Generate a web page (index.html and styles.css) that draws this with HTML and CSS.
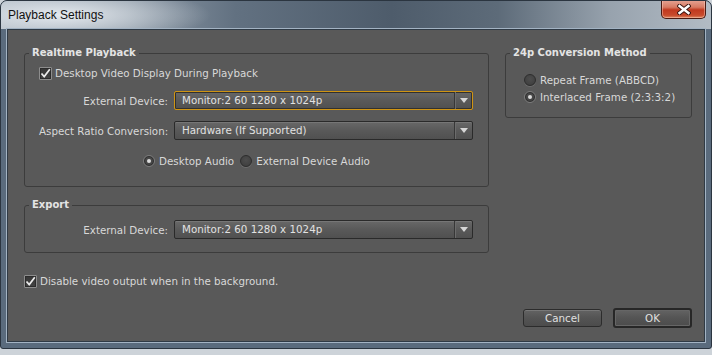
FILE: index.html
```html
<!DOCTYPE html>
<html lang="en">
<head>
    <meta charset="UTF-8">
    <title>Playback Settings</title>
    <link rel="stylesheet" href="styles.css">
</head>
<body>

    <div class="window">
        <div class="titlebar">
            <span class="title">Playback Settings</span>
            <button class="close" title="Close">
                <svg width="14" height="11" viewBox="0 0 14 11">
                    <path d="M2.5 2 L11.5 9 M11.5 2 L2.5 9" stroke="#3b1510" stroke-width="4.4" stroke-linecap="square"/>
                    <path d="M2.5 2 L11.5 9 M11.5 2 L2.5 9" stroke="#ffffff" stroke-width="2.4" stroke-linecap="square"/>
                </svg>
            </button>
        </div>

        <div class="client">
            <div class="top">
                <div class="left-col">
                    <!-- 实时播放 -->
                    <fieldset class="group realtime">
                        <legend>Realtime Playback</legend>
                        <label class="check-row desktop-video">
                            <span class="checkbox"><svg width="11" height="11" viewBox="0 0 11 11"><path d="M1.5 5.5 L4.2 8.6 L9.8 1.2" fill="none" stroke="#ececec" stroke-width="1.7"/></svg></span>
                            Desktop Video Display During Playback
                        </label>
                        <div class="field-grid">
                            <span class="field-label">External Device:</span>
                            <div class="select focused">
                                <span class="select-value">Monitor:2 60 1280 x 1024p</span>
                                <span class="select-arrow"></span>
                            </div>
                            <span class="field-label">Aspect Ratio Conversion:</span>
                            <div class="select">
                                <span class="select-value">Hardware (If Supported)</span>
                                <span class="select-arrow"></span>
                            </div>
                        </div>
                        <div class="audio-row">
                            <label class="radio-row"><span class="radio checked"></span>Desktop Audio</label>
                            <label class="radio-row"><span class="radio"></span>External Device Audio</label>
                        </div>
                    </fieldset>

                    <!-- 导出 -->
                    <fieldset class="group export">
                        <legend>Export</legend>
                        <div class="field-grid">
                            <span class="field-label">External Device:</span>
                            <div class="select">
                                <span class="select-value">Monitor:2 60 1280 x 1024p</span>
                                <span class="select-arrow"></span>
                            </div>
                        </div>
                    </fieldset>
                </div>

                <fieldset class="group conversion">
                    <legend>24p Conversion Method</legend>
                    <label class="radio-row"><span class="radio"></span>Repeat Frame (ABBCD)</label>
                    <label class="radio-row"><span class="radio checked"></span>Interlaced Frame (2:3:3:2)</label>
                </fieldset>
            </div>

            <label class="check-row background-row">
                <span class="checkbox"><svg width="11" height="11" viewBox="0 0 11 11"><path d="M1.5 5.5 L4.2 8.6 L9.8 1.2" fill="none" stroke="#ececec" stroke-width="1.7"/></svg></span>
                Disable video output when in the background.
            </label>

            <div class="buttons">
                <button class="btn cancel">Cancel</button>
                <button class="btn default">OK</button>
            </div>
        </div>
    </div>

</body>
</html>
```

FILE: styles.css
```css
* {
    box-sizing: border-box;
}

body {
    margin: 0;
    background-color: #cdd3d9;
    font-family: "DejaVu Sans", sans-serif;
}

.window {
    width: 712px;
    height: 349px;
    display: flex;
    flex-direction: column;
    padding: 0 6px 6px;
    border: 1px solid #2b3540;
    border-radius: 7px 7px 3px 3px;
    background-color: #5a6b7d;
    overflow: hidden;
}

.titlebar {
    height: 28px;
    margin: 0 -6px;
    padding: 0 5px 0 7px;
    display: flex;
    justify-content: space-between;
    align-items: flex-start;
    background:
        radial-gradient(ellipse 150px 28px at 60px 14px, rgba(236, 240, 244, 0.9), rgba(236, 240, 244, 0)),
        linear-gradient(90deg, #aab5c0 0%, #8d9aa7 18%, #627181 33%, #4e5c6b 55%, #5d6b79 70%, #98a3ae 86%, #b2bbc4 100%);
}

.title {
    font-family: "Liberation Sans", sans-serif;
    font-size: 12px;
    line-height: 28px;
    color: #111;
}

.close {
    width: 45px;
    height: 19px;
    margin-top: -1px;
    padding: 0;
    display: flex;
    align-items: center;
    justify-content: center;
    border: 1px solid #4a1a12;
    border-top: none;
    border-radius: 0 0 5px 5px;
    background: linear-gradient(#e6a595 0%, #d77a63 40%, #c1391f 55%, #c84a2c 85%, #de8a64 100%);
    box-shadow: inset 0 0 0 1px rgba(255, 210, 195, 0.45);
}

.client {
    flex: 1;
    display: flex;
    flex-direction: column;
    padding: 16px 12px 0 16px;
    background-color: #595959;
    border: 1px solid #2f3a45;
    box-shadow: 0 0 0 1px #a3b3c3;
    color: #d8d8d8;
    font-size: 10.3px;
}

.top {
    display: flex;
    justify-content: space-between;
    align-items: flex-start;
}

.left-col {
    width: 465px;
}

/* 分组框 */
.group {
    margin: 0;
    padding: 0;
    border: 1px solid #3c3c3c;
    border-radius: 3px;
}

.group legend {
    margin-left: 4px;
    padding: 0 3px;
    font-weight: bold;
    font-size: 10px;
    line-height: 14px;
    color: #e4e4e4;
}

.realtime {
    padding: 6px 15px 18px 0;
}

.export {
    margin-top: 11px;
    padding: 8px 15px 13px 0;
}

.desktop-video,
.field-grid {
    margin-left: 14px;
}

.conversion {
    width: 187px;
    padding: 13px 0 13px 0;
}

.conversion .radio-row {
    margin-left: 18px;
}

.conversion .radio-row + .radio-row {
    margin-top: 3px;
}

.check-row,
.radio-row {
    display: flex;
    align-items: center;
    height: 14px;
    line-height: 14px;
    white-space: nowrap;
}

.check-row {
    gap: 3px;
}

.radio-row {
    gap: 4px;
}

.checkbox {
    width: 13px;
    height: 13px;
    display: flex;
    align-items: center;
    justify-content: center;
    border: 1px solid #8d8d8d;
    border-radius: 1px;
    background: linear-gradient(#363636, #444);
    box-shadow: inset 0 0 0 1px #2c2c2c;
}

.radio {
    width: 12px;
    height: 12px;
    display: flex;
    align-items: center;
    justify-content: center;
    border: 1px solid #2d2d2d;
    border-radius: 50%;
    background: radial-gradient(circle at 50% 40%, #4d4d4d, #3c3c3c);
    box-shadow: 0 1px 0 #6c6c6c;
}

.radio.checked {
    border-color: #7c7c7c;
    box-shadow: inset 0 0 0 1px #2d2d2d;
}

.radio.checked::after {
    content: '';
    width: 4px;
    height: 4px;
    border-radius: 50%;
    background-color: #dcdcdc;
}

.field-grid {
    display: grid;
    grid-template-columns: 129px 299px;
    column-gap: 6px;
    row-gap: 11px;
    align-items: center;
}

.realtime .field-grid {
    margin-top: 11px;
}

.field-label {
    text-align: right;
    white-space: nowrap;
}

/* 下拉框 */
.select {
    height: 19px;
    display: flex;
    align-items: stretch;
    border: 1px solid #2a2a2a;
    border-radius: 2px;
    background: linear-gradient(#686868, #595959 50%, #505050);
    box-shadow: inset 0 1px 0 rgba(255, 255, 255, 0.1);
    color: #e2e2e2;
}

.select.focused {
    border-color: #cf9413;
    box-shadow: inset 0 0 0 1px #303030;
}

.select-value {
    flex: 1;
    padding-left: 7px;
    line-height: 17px;
    white-space: nowrap;
}

.select-arrow {
    width: 18px;
    display: flex;
    align-items: center;
    justify-content: center;
    border-left: 1px solid #373737;
    box-shadow: inset 1px 0 0 #6c6c6c;
}

.select-arrow::after {
    content: '';
    border-left: 4px solid transparent;
    border-right: 4px solid transparent;
    border-top: 5px solid #d6d6d6;
}

.audio-row {
    margin-top: 14px;
    padding-left: 15px;
    display: flex;
    justify-content: center;
    gap: 6px;
}

.background-row {
    margin-top: 21px;
}

.buttons {
    margin-top: 20px;
    display: flex;
    justify-content: flex-end;
    align-items: center;
    gap: 10px;
}

.btn {
    width: 79px;
    height: 20px;
    padding: 0;
    font: inherit;
    color: #e0e0e0;
    border: 1px solid #2c2c2c;
    border-radius: 3px;
    background: linear-gradient(#636363, #545454 50%, #4c4c4c);
    box-shadow: inset 0 1px 0 rgba(255, 255, 255, 0.14);
}

.btn.cancel {
    height: 18px;
    margin: 0 1px;
}

.btn.default {
    border: 2px solid #272727;
    box-shadow: inset 0 0 0 1px #666;
}
```
